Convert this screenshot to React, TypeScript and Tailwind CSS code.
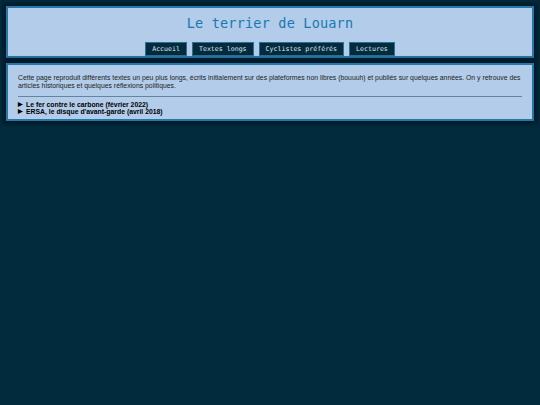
import React from 'react';

const navItems = ['Accueil', 'Textes longs', 'Cyclistes préférés', 'Lectures'];

const articles = [
  'Le fer contre le carbone (février 2022)',
  "ERSA, le disque d'avant-garde (avril 2018)",
];

export default function App() {
  return (
    <div className="min-h-[405px] w-full bg-[#022b3e] px-[6px] py-[6px] flex flex-col gap-[5px]">
      {/* header */}
      <header className="bg-[#b2cce9] border-2 border-[#2678a8] shadow-[0_0_4px_3px_#001a28] flex flex-col items-center pt-[6px] h-[52px]">
        <h1 className="font-['DejaVu_Sans_Mono',monospace] text-[13.5px] leading-[18px] text-[#1679b1] tracking-[0.2px]">
          Le terrier de Louarn
        </h1>
        <nav className="flex gap-[5px] mt-[10px]">
          {navItems.map((item) => (
            <a
              key={item}
              href="#"
              className="bg-[#032b3e] border border-[#2a6f96] text-[#dde7f1] font-['DejaVu_Sans_Mono',monospace] text-[6.6px] leading-[12px] px-[6px]"
            >
              {item}
            </a>
          ))}
        </nav>
      </header>

      {/* main */}
      <main className="bg-[#b2cce9] border-2 border-[#2678a8] shadow-[0_0_4px_3px_#001a28] px-[10px] pt-[9px] pb-[4px] font-['Liberation_Sans',Arial,sans-serif] text-[6.85px] leading-[8px] text-[#222]">
        <p>
          Cette page reproduit différents textes un peu plus longs, écrits initialement sur des plateformes non libres
          (bouuuh) et publiés sur quelques années. On y retrouve des articles historiques et quelques réflexions politiques.
        </p>
        <hr className="mt-[6px] mb-[4px] border-t border-[#66839c]" />
        <ul className="font-bold text-black">
          {articles.map((a) => (
            <li key={a} className="flex items-center gap-[3px] leading-[7px]">
              <span className="text-[6px]">▶</span>
              <span>{a}</span>
            </li>
          ))}
        </ul>
      </main>
    </div>
  );
}
